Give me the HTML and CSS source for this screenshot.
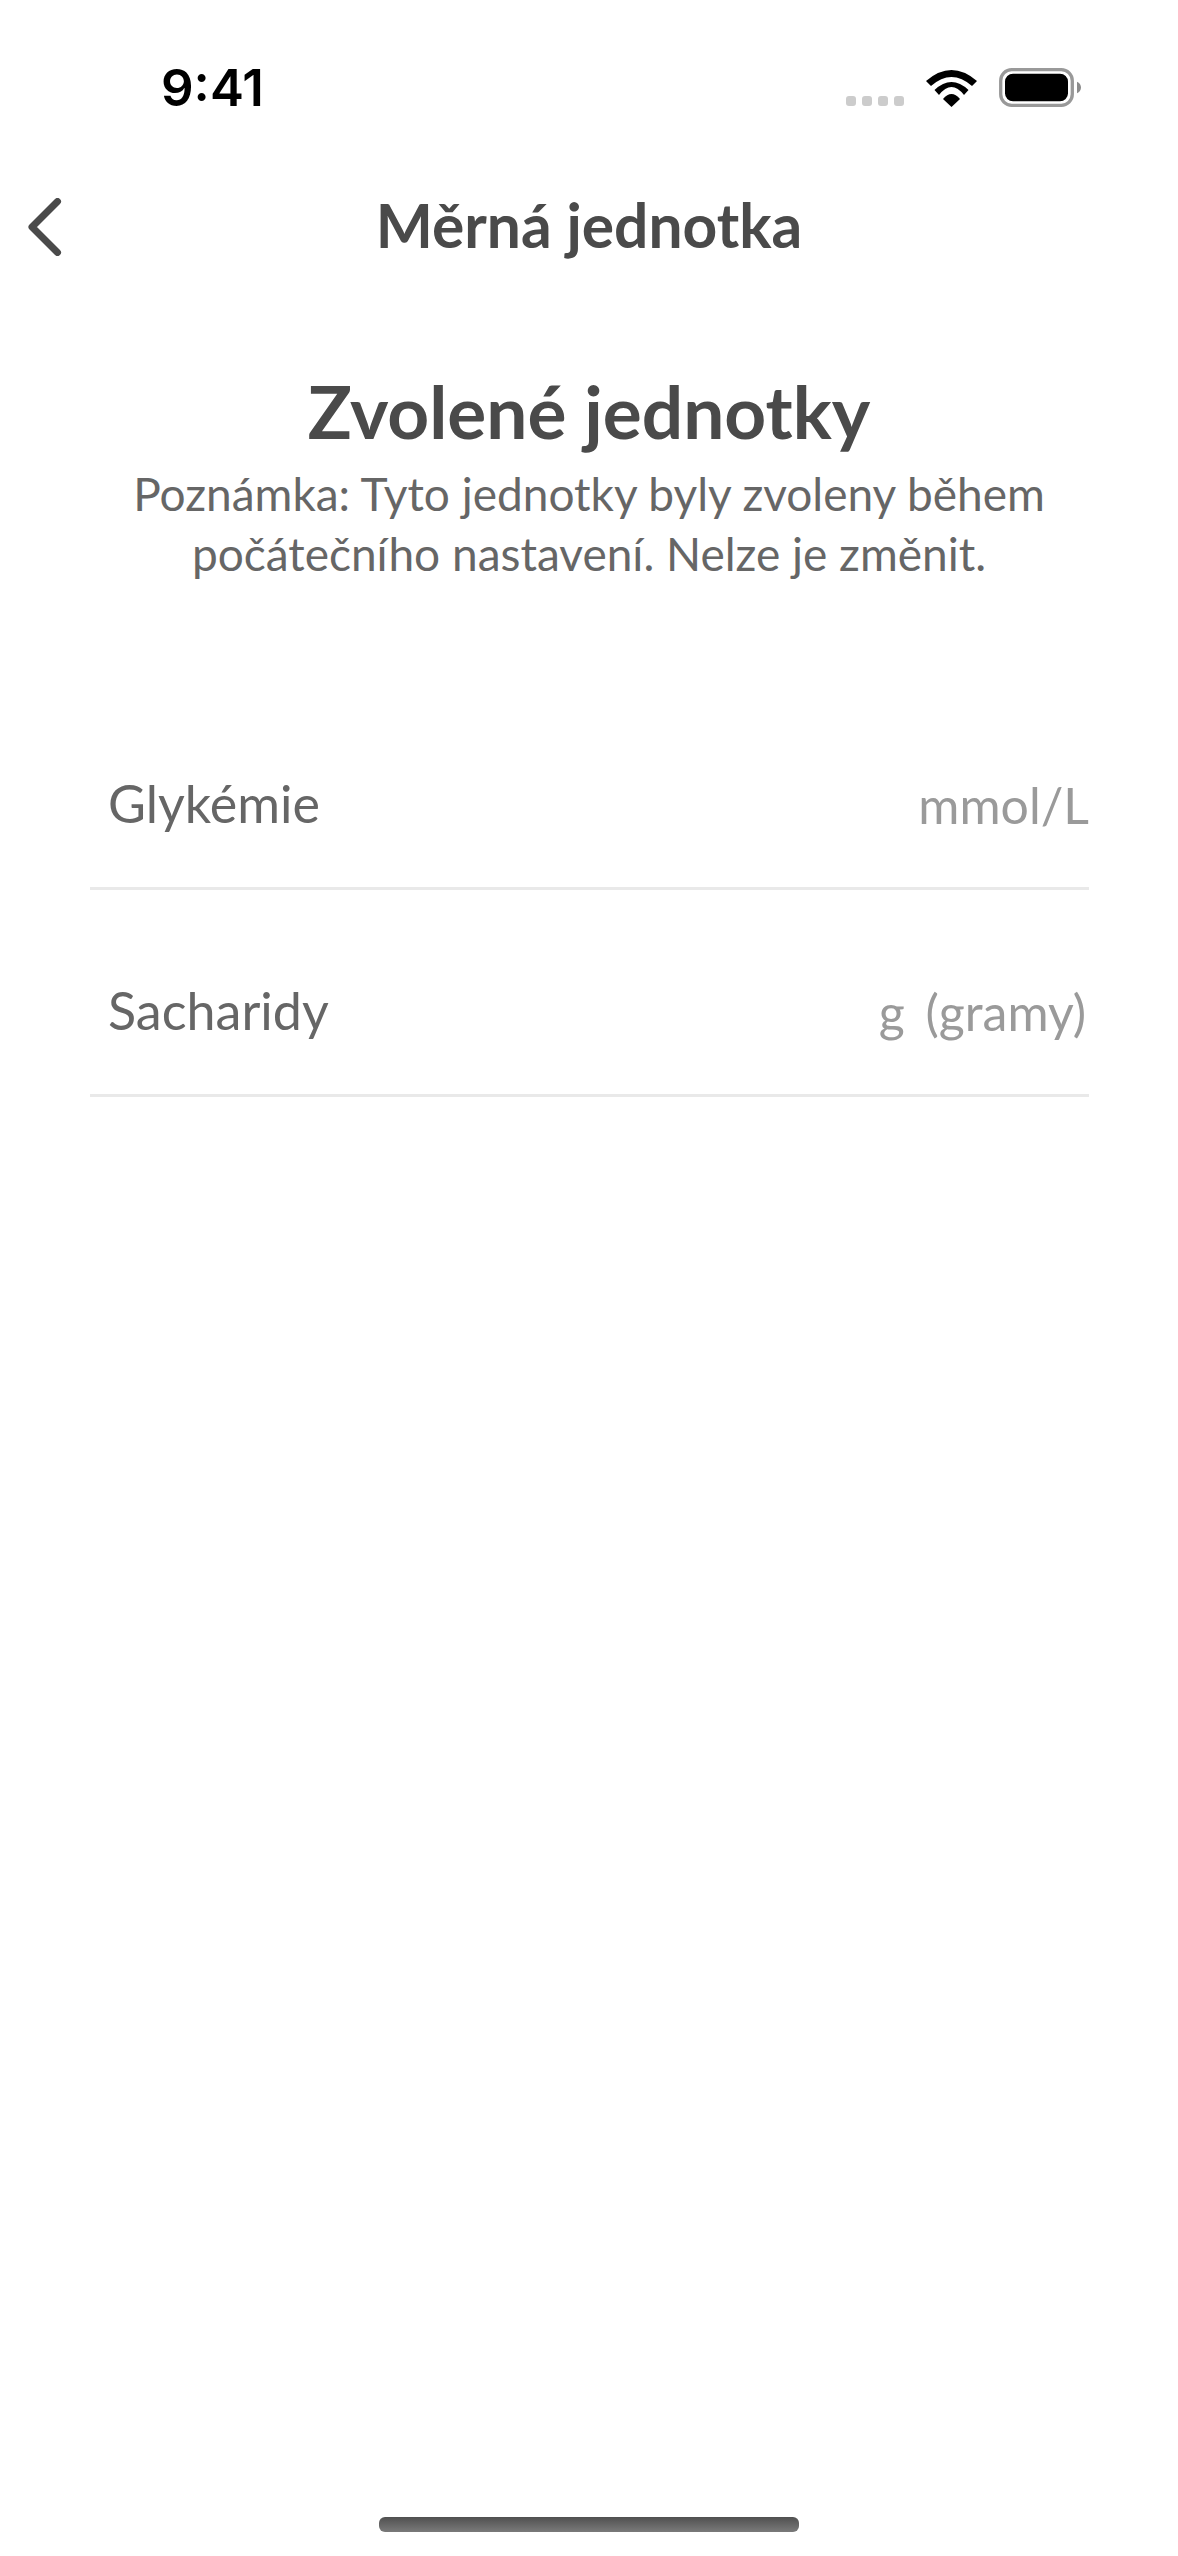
FILE: index.html
```html
<!DOCTYPE html>
<html lang="cs">
<head>
    <meta charset="utf-8">
    <title>Měrná jednotka</title>
    <link rel="stylesheet" href="styles.css">
</head>
<body>
<div id="main">
    <div class="status">
        <span class="time">9:41</span>
        <div class="status-icons">
            <div class="signal"><i></i><i></i><i></i><i></i></div>
            <svg class="wifi" width="51" height="37" viewBox="0 0 51 37">
                <path fill="#000" d="M0 11Q25.500-11 51 11L46 16Q25.500-2 5 16Z"/>
                <path fill="#000" d="M8.500 20Q25.500 4 42.500 20L38 25Q25.500 9 13 25Z"/>
                <path fill="#000" d="M17 29Q25.500 19 34 29L25.500 37Z"/>
            </svg>
            <svg class="battery" width="82" height="39" viewBox="0 0 82 39">
                <rect x="1.700" y="1.700" width="71.600" height="35.600" rx="11" fill="none" stroke="#999999" stroke-width="3.300"/>
                <rect x="6" y="5.700" width="63" height="27.600" rx="8" fill="#000"/>
                <path d="M78 13.700c2.500 1 4 3.200 4 5.800s-1.500 4.800-4 5.800z" fill="#8c8c8c"/>
            </svg>
        </div>
    </div>

    <div class="nav">
        <svg class="back" width="34" height="58" viewBox="0 0 34 58">
            <path d="M29.500 3.500 4 29l25.500 25.500" fill="none" stroke="#4a4a4a" stroke-width="7" stroke-linecap="round" stroke-linejoin="round"/>
        </svg>
        <span class="nav-title">Měrná jednotka</span>
    </div>

    <div class="intro">
        <h1>Zvolené jednotky</h1>
        <p>Poznámka: Tyto jednotky byly zvoleny během<br>počátečního nastavení. Nelze je změnit.</p>
    </div>

    <div class="units">
        <div class="row">
            <span class="label">Glykémie</span>
            <span class="value">mmol/L</span>
        </div>
        <div class="row row-grams">
            <span class="label">Sacharidy</span>
            <span class="value">g (gramy)</span>
        </div>
    </div>

    <div class="home-bar"></div>
</div>
</body>
</html>
```

FILE: styles.css
```css
* {
    box-sizing: border-box;
}

body {
    margin: 0;
    background-color: #ffffff;
    font-family: "Lato", "Noto Sans", sans-serif;
    color: #4a4a4a;
}

#main {
    width: 1178px;
    height: 2556px;
    display: flex;
    flex-direction: column;
    overflow: hidden;
}

.status {
    height: 180px;
    padding: 68px 97px 0 161px;
    display: flex;
    align-items: flex-start;
    justify-content: space-between;
    flex-shrink: 0;
}

.time {
    font-family: "Inter", sans-serif;
    font-size: 51px;
    font-weight: 600;
    line-height: 40px;
    color: #000000;
}

.status-icons {
    display: flex;
    align-items: flex-end;
    gap: 22px;
}

.signal {
    display: flex;
    gap: 6px;
    padding-bottom: 1px;
}

.signal i {
    width: 10px;
    height: 10px;
    border-radius: 3px;
    background-color: #cccccc;
}

.nav {
    height: 88px;
    padding-left: 28px;
    display: grid;
    grid-template-columns: 1fr auto 1fr;
    align-items: center;
    flex-shrink: 0;
}

.back {
    display: block;
    margin-top: 6px;
}

.nav-title {
    font-size: 60.5px;
    font-weight: 700;
    margin-left: -28px;
}

.intro {
    margin-top: 97px;
    text-align: center;
}

.intro h1 {
    margin: 0;
    font-size: 73px;
    font-weight: 700;
    line-height: 92px;
}

.intro p {
    margin: 0;
    padding-top: 7px;
    font-size: 46px;
    line-height: 60px;
    color: #666666;
}

.units {
    margin: 99px 89px 0 90px;
}

.row {
    height: 207px;
    padding: 36px 0 0 18px;
    display: flex;
    align-items: center;
    justify-content: space-between;
    border-bottom: solid 3px #e9e9e9;
}

.row-grams {
    padding-right: 3px;
}

.label {
    font-size: 52px;
    color: #666666;
}

.value {
    font-size: 50px;
    word-spacing: 8px;
    padding-top: 4px;
    color: #9a9a9a;
}

.home-bar {
    width: 420px;
    height: 15px;
    margin: auto auto 24px;
    border-radius: 6px;
    background-image: linear-gradient(#505050, #7a7a7a);
}
```
